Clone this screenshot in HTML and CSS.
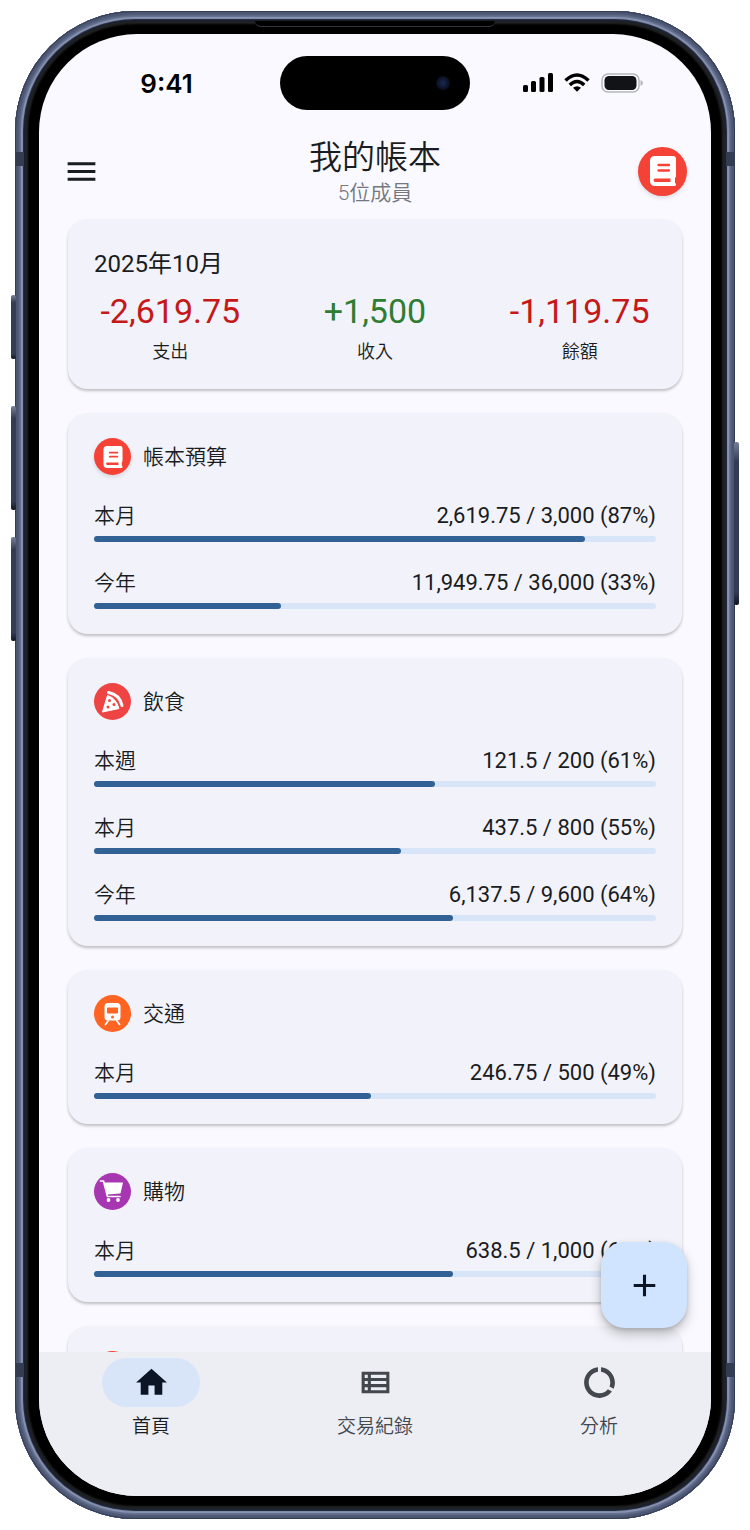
FILE: index.html
```
<!DOCTYPE html>
<html lang="zh-Hant">
<head>
    <meta charset="UTF-8">
    <meta name="viewport" content="width=device-width, initial-scale=1.0">
    <title>我的帳本</title>
    <link rel="stylesheet" href="styles.css">
</head>
<body>
    <!-- shared icons -->
    <svg class="defs" width="0" height="0" aria-hidden="true">
        <symbol id="book" viewBox="0 0 26 30">
            <path fill="#fff" d="M5 0H23Q26 0 26 3V20Q26 21 25 22V27Q26 27 26 28.500Q26 30 24.500 30H5Q0 30 0 25V5Q0 0 5 0Z"/>
            <path stroke="currentColor" stroke-width="2.300" stroke-linecap="round" fill="none" d="M8.500 9H19M8.500 14.500H19"/>
            <path fill="currentColor" d="M5.500 22.500H20.500V26H5.500Q3.500 26 3.500 24.200T5.500 22.500Z"/>
        </symbol>
    </svg>

    <div class="phone">
        <span class="side action"></span>
        <span class="side up"></span>
        <span class="side down"></span>
        <span class="side power"></span>
        <span class="band top-left"></span>
        <span class="band top-right"></span>
        <span class="band bottom-left"></span>
        <span class="band bottom-right"></span>
        <div class="screen">
            <div class="status">
                <div class="time">9:41</div>
                <div class="island"><span class="camera"></span></div>
                <div class="signals">
                    <svg width="30" height="20" viewBox="0 0 30 20"><rect x="0" y="12" width="5" height="7" rx="1.500"/><rect x="8" y="8" width="5" height="11" rx="1.500"/><rect x="16.500" y="4" width="5" height="15" rx="1.500"/><rect x="25" y="0" width="5" height="19" rx="1.500"/></svg>
                    <svg width="26" height="20" viewBox="0 0 26 20"><g fill="none" stroke="#000" stroke-width="3.400"><path d="M1.500 7.500Q13-3.500 24.500 7.500"/><path d="M5.800 12Q13 5 20.200 12"/></g><path d="M13 18.700L9 14.800Q13 11.600 17 14.800Z"/></svg>
                    <svg width="42" height="20" viewBox="0 0 42 20"><rect x="1" y="1" width="37" height="18" rx="6" fill="none" stroke="#b5b6ba" stroke-width="1.500"/><rect x="3.500" y="3" width="32" height="14" rx="4.500" fill="#111317"/><path fill="#b5b6ba" d="M39.500 7Q42 8 42 10T39.500 13Z"/></svg>
                </div>
            </div>

            <header class="topbar">
                <button class="menu" type="button" aria-label="選單">
                    <svg viewBox="0 0 24 24"><path d="M3 18h18v-2H3v2zm0-5h18v-2H3v2zm0-7v2h18V6H3z"/></svg>
                </button>
                <div class="heading">
                    <h1>我的帳本</h1>
                    <p>5位成員</p>
                </div>
                <button class="avatar red" type="button" aria-label="帳本"><svg><use href="#book"/></svg></button>
            </header>

            <div class="content">
                <main class="list">
                    <section class="card summary">
                        <h2>2025年10月</h2>
                        <dl class="totals">
                            <div><dd class="minus">-2,619.75</dd><dt>支出</dt></div>
                            <div><dd class="plus">+1,500</dd><dt>收入</dt></div>
                            <div><dd class="minus">-1,119.75</dd><dt>餘額</dt></div>
                        </dl>
                    </section>

                    <section class="card">
                        <h3><span class="icon red raised"><svg class="book"><use href="#book"/></svg></span>帳本預算</h3>
                        <div class="budget">
                            <label for="b1">本月</label><span>2,619.75 / 3,000 (87%)</span>
                            <progress id="b1" max="3000" value="2619.75"></progress>
                        </div>
                        <div class="budget">
                            <label for="b2">今年</label><span>11,949.75 / 36,000 (33%)</span>
                            <progress id="b2" max="36000" value="11949.75"></progress>
                        </div>
                    </section>

                    <section class="card">
                        <h3><span class="icon food"><svg viewBox="0 0 37 37"><path fill="#fff" stroke="#fff" stroke-width="1" stroke-linejoin="round" d="M13.500 12.500Q22 15 25 25.500L8.500 29Z"/><path fill="none" stroke="#fff" stroke-width="3" stroke-linecap="round" d="M14.500 9.500Q25.500 11.500 28 22.500"/><g fill="#ef4444"><circle cx="15.500" cy="17.500" r="1.500"/><circle cx="20" cy="21.500" r="1.500"/><circle cx="14" cy="24" r="1.500"/></g></svg></span>飲食</h3>
                        <div class="budget">
                            <label for="b3">本週</label><span>121.5 / 200 (61%)</span>
                            <progress id="b3" max="200" value="121.5"></progress>
                        </div>
                        <div class="budget">
                            <label for="b4">本月</label><span>437.5 / 800 (55%)</span>
                            <progress id="b4" max="800" value="437.5"></progress>
                        </div>
                        <div class="budget">
                            <label for="b5">今年</label><span>6,137.5 / 9,600 (64%)</span>
                            <progress id="b5" max="9600" value="6137.5"></progress>
                        </div>
                    </section>

                    <section class="card">
                        <h3><span class="icon traffic"><svg viewBox="0 0 37 37"><path fill="#fff" fill-rule="evenodd" d="M14 8H23Q26.500 8 26.500 11.500V22Q26.500 25.500 23 25.500H14Q10.500 25.500 10.500 22V11.500Q10.500 8 14 8ZM14 12.500Q13 12.500 13 13.500V17.500Q13 18.500 14 18.500H23Q24 18.500 24 17.500V13.500Q24 12.500 23 12.500Z"/><path fill="none" stroke="#fff" stroke-width="1.800" stroke-linecap="round" d="M14 26L11.500 29.500M23 26L25.500 29.500"/><circle cx="18.500" cy="22" r="1.500" fill="#ff6422"/></svg></span>交通</h3>
                        <div class="budget">
                            <label for="b6">本月</label><span>246.75 / 500 (49%)</span>
                            <progress id="b6" max="500" value="246.75"></progress>
                        </div>
                    </section>

                    <section class="card">
                        <h3><span class="icon shopping"><svg viewBox="0 0 37 37"><path fill="none" stroke="#fff" stroke-width="1.700" stroke-linecap="round" stroke-linejoin="round" d="M6.500 8H9.500L13.500 23.500H26"/><path fill="#fff" d="M10.500 9.500H29L26.500 20.500L13 21.500Z"/><circle cx="14.500" cy="27" r="1.900" fill="#fff"/><circle cx="24" cy="27" r="1.900" fill="#fff"/></svg></span>購物</h3>
                        <div class="budget">
                            <label for="b7">本月</label><span>638.5 / 1,000 (64%)</span>
                            <progress id="b7" max="1000" value="638.5"></progress>
                        </div>
                    </section>

                    <section class="card">
                        <h3><span class="icon red"></span></h3>
                    </section>
                </main>
                <button class="fab" type="button" aria-label="新增">
                    <svg viewBox="0 0 24 24"><path d="M19 13h-6v6h-2v-6H5v-2h6V5h2v6h6v2z"/></svg>
                </button>
            </div>

            <nav class="tabs">
                <a href="#" class="active"><span class="pill"><svg viewBox="0 0 24 24"><path d="M10 20v-6h4v6h5v-8h3L12 3 2 12h3v8z"/></svg></span>首頁</a>
                <a href="#"><span class="pill"><svg viewBox="0 0 24 24"><path fill-rule="evenodd" d="M3 5v14h18V5H3zm4 2v2H5V7h2zm-2 6v-2h2v2H5zm0 2h2v2H5v-2zm14 2H9v-2h10v2zm0-4H9v-2h10v2zm0-4H9V7h10v2z"/></svg></span>交易紀錄</a>
                <a href="#"><span class="pill"><svg viewBox="0 0 24 24"><path d="M13 2.050v3.030c3.390.49 6 3.390 6 6.920 0 .9-.18 1.750-.48 2.540l2.600 1.530c.56-1.240.88-2.620.88-4.070 0-5.180-3.950-9.450-9-9.950zM12 19c-3.870 0-7-3.130-7-7 0-3.530 2.610-6.430 6-6.920V2.050c-5.060.5-9 4.760-9 9.950 0 5.520 4.470 10 9.990 10 3.310 0 6.240-1.610 8.060-4.090l-2.600-1.530C16.170 17.980 14.210 19 12 19z"/></svg></span>分析</a>
            </nav>
        </div>
    </div>
</body>
</html>
```

FILE: styles.css
```
*{margin:0; padding:0; box-sizing:border-box;}
body{
    height:100vh;
    padding:11px 15px;
    background-color:#fff;
    color:#191c20;
    font-family:Roboto, "Noto Sans CJK TC", sans-serif;
}
button{border:0; background:none; font:inherit; cursor:pointer;}
a{text-decoration:none;}
svg{display:block;}
.defs{position:absolute;}

/* phone frame */
.phone{
    position:relative;
    height:100%;
    padding:23px 24px;
    border-radius:120px;
    background-color:#000;
    box-shadow:
        inset 0 0 0 1px #343d55,
        inset 0 0 2px 4px #4b5673,
        inset 0 0 1px 6px #66718f,
        inset 0 0 1px 8px #8c97b6,
        inset 0 0 1px 10px #1b2133,
        inset 0 0 2px 13px #202224;
}
/* lip above the earpiece */
.phone::before{
    content:"";
    position:absolute;
    top:10px;
    left:50%;
    width:240px;
    height:5px;
    margin-left:-120px;
    border-bottom:1px solid #33363c;
    border-radius:0 0 6px 6px;
    background-color:#000;
}
.side{
    position:absolute;
    width:5px;
    border-radius:2px;
    background:linear-gradient(#76809a, #333c54 12%, #333c54 92%, #111522);
}
.action{left:-4px; top:284px; height:64px;}
.up{left:-4px; top:395px; height:104px;}
.down{left:-4px; top:526px; height:104px;}
.power{right:-4px; top:431px; height:163px;}
/* antenna bands */
.band{
    position:absolute;
    width:8px;
    height:14px;
    background-color:#333c50;
}
.top-left{left:1px; top:141px;}
.top-right{right:1px; top:141px;}
.bottom-left{left:1px; bottom:142px;}
.bottom-right{right:1px; bottom:142px;}

.screen{
    display:flex;
    flex-direction:column;
    height:100%;
    overflow:hidden;
    border-radius:98px;
    background-color:#f9f9ff;
}

/* status bar */
.status{
    flex:none;
    display:grid;
    grid-template-columns:1fr 190px 1fr;
    align-items:center;
    padding:22px 0;
}
.time{
    padding-left:14px;
    text-align:center;
    font-family:Inter, sans-serif;
    font-size:26px;
    font-weight:600;
    color:#000;
}
.island{
    display:flex;
    align-items:center;
    justify-content:flex-end;
    height:54px;
    padding-right:20px;
    border-radius:27px;
    background-color:#000;
}
.camera{
    width:14px;
    height:14px;
    border-radius:50%;
    background:radial-gradient(#1b2a55, #080c1c 70%);
}
.signals{
    display:flex;
    justify-content:center;
    gap:11px;
    padding-right:16px;
}

/* title bar */
.topbar{
    flex:none;
    display:flex;
    align-items:center;
    justify-content:space-between;
    padding:3px 24px;
}
.menu{width:49px; height:49px;}
.menu svg{width:37px; height:37px; fill:#191c20;}
.heading{padding-top:2px; text-align:center;}
.heading h1{font-size:33px; font-weight:350; line-height:42px;}
.heading p{font-size:21px; font-weight:350; line-height:28px; color:#74777f;}
.avatar{
    display:grid;
    place-items:center;
    width:49px;
    height:49px;
    border-radius:50%;
    box-shadow:0 2px 4px rgba(0,0,0,.12);
}
.avatar svg{width:26px; height:30px; color:#f44336;}
.red{background-color:#f44336;}

/* cards */
.content{
    position:relative;
    flex:1;
    min-height:0;
}
.list{
    display:flex;
    flex-direction:column;
    gap:24px;
    height:100%;
    padding:9px 29px 0;
    overflow:hidden;
}
.card{
    flex:none;
    padding:25px 26px;
    border-radius:20px;
    background-color:#f2f2fa;
    box-shadow:0 2px 3px rgba(0,0,0,.24);
}
.summary{padding:25px 0;}
.summary h2{
    padding:0 26px;
    font-size:24px;
    font-weight:400;
    line-height:40px;
}
.totals{
    display:grid;
    grid-template-columns:repeat(3, 1fr);
    margin-top:7px;
    text-align:center;
}
.totals dd{font-size:34px; line-height:40px;}
.totals dt{margin-top:9px; font-size:18px; font-weight:350; line-height:24px;}
.minus{color:#c51818;}
.plus{color:#2e7d32;}
.card h3{
    display:flex;
    align-items:center;
    gap:12px;
    height:37px;
    font-size:21px;
    font-weight:350;
    line-height:30px;
}
.icon{
    display:grid;
    place-items:center;
    width:37px;
    height:37px;
    border-radius:50%;
}
.icon svg{width:37px; height:37px;}
.icon .book{width:20px; height:22px; color:#f44336;}
.raised{box-shadow:0 2px 4px rgba(0,0,0,.12);}
.food{background-color:#ef4444;}
.traffic{background-color:#ff6422;}
.shopping{background-color:#a737b0;}

.budget{
    display:grid;
    grid-template-columns:auto 1fr;
    row-gap:5px;
    padding-top:26px;
    line-height:30px;
}
.budget label{font-size:21px; font-weight:350;}
.budget span{font-size:22px; text-align:right;}
.budget progress{
    grid-column:1 / -1;
    width:100%;
    height:6px;
    border:0;
    appearance:none;
    -webkit-appearance:none;
}
.budget progress::-webkit-progress-bar{border-radius:3px; background-color:#d8e5f9;}
.budget progress::-webkit-progress-value{border-radius:3px; background-color:#326295;}

.fab{
    position:absolute;
    right:24px;
    bottom:24px;
    display:grid;
    place-items:center;
    width:86px;
    height:86px;
    border-radius:24px;
    background-color:#d1e4ff;
    box-shadow:0 6px 12px rgba(0,0,0,.24), 0 2px 4px rgba(0,0,0,.12);
}
.fab svg{width:37px; height:37px; fill:#0b1526;}

/* bottom navigation */
.tabs{
    flex:none;
    display:grid;
    grid-template-columns:repeat(3, 1fr);
    height:144px;
    padding-top:6px;
    background-color:#edeef4;
}
.tabs a{
    display:flex;
    flex-direction:column;
    align-items:center;
    gap:6px;
    font-size:19px;
    font-weight:350;
    line-height:28px;
    color:#43474e;
}
.tabs .active{color:#191c20;}
.pill{
    display:grid;
    place-items:center;
    width:98px;
    height:49px;
    border-radius:25px;
}
.active .pill{background-color:#d8e5f9;}
.pill svg{width:37px; height:37px; fill:#43474e;}
.active svg{fill:#0b1526;}
```
